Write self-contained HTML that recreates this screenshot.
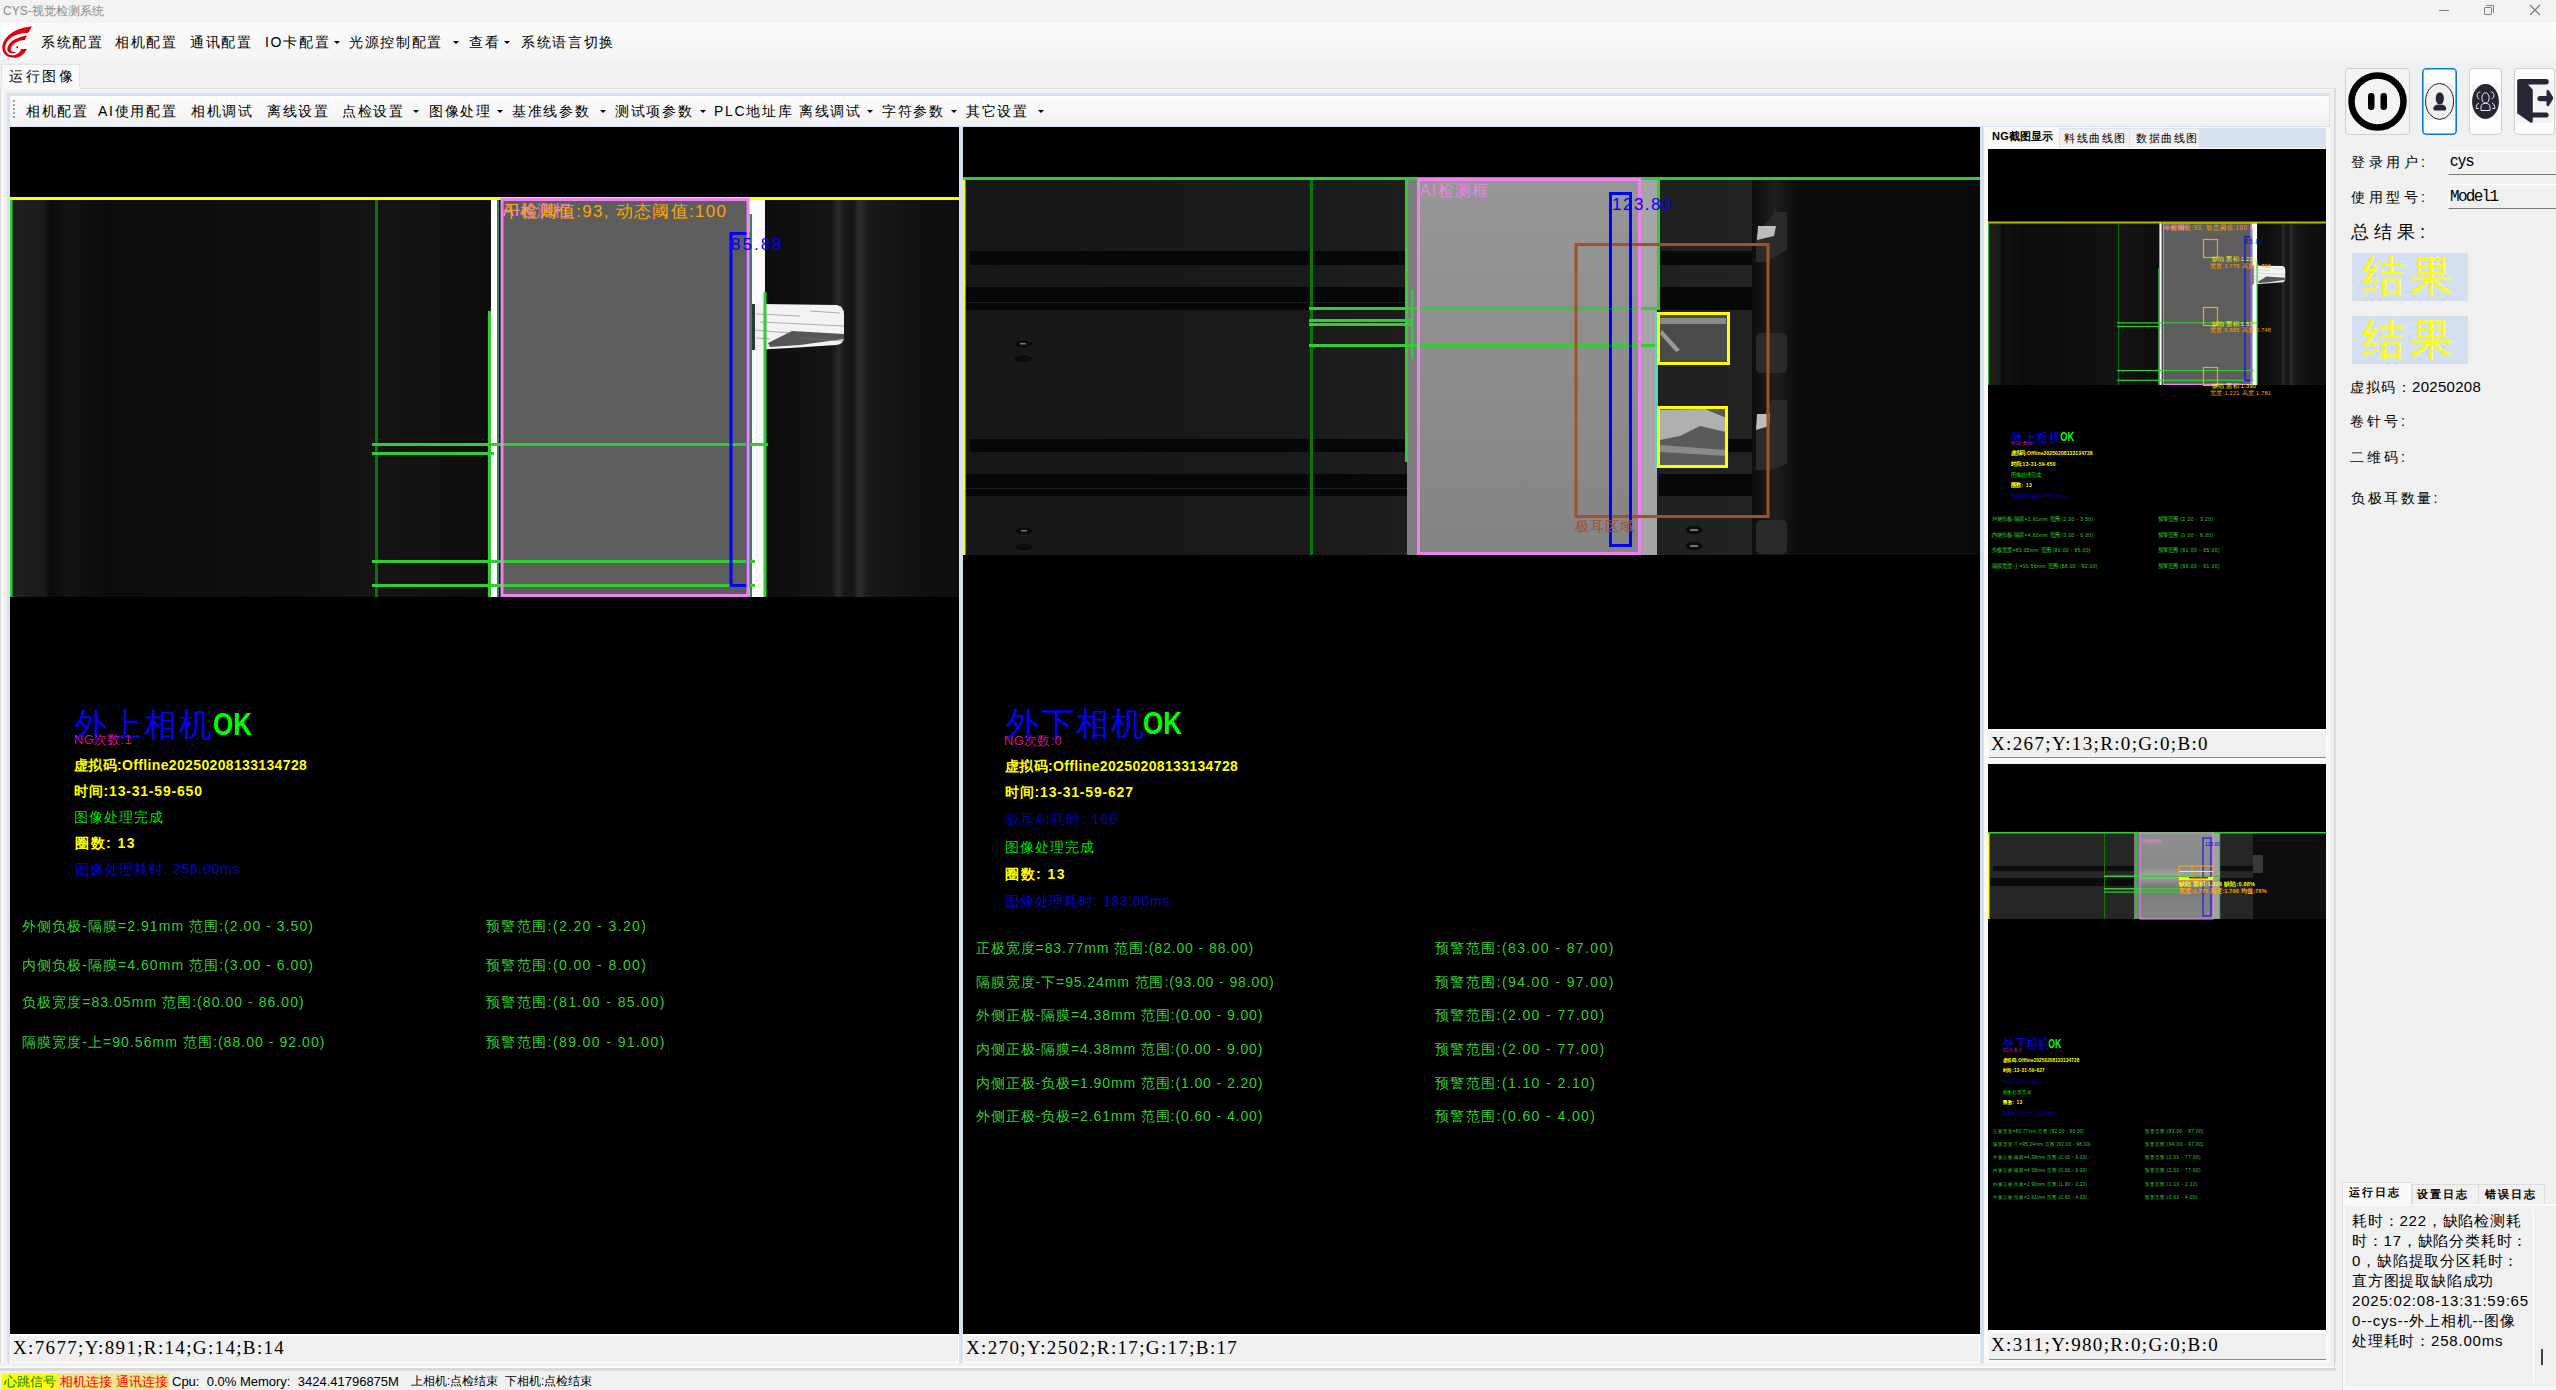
<!DOCTYPE html>
<html><head><meta charset="utf-8">
<style>
*{box-sizing:border-box;margin:0;padding:0}
html,body{width:2556px;height:1390px;overflow:hidden;background:#f0f0f0;font-family:"Liberation Sans",sans-serif;}
.a{position:absolute;white-space:nowrap;line-height:1}
.cj{letter-spacing:1.7px}
.arr{position:absolute;width:0;height:0;border-left:3px solid transparent;border-right:3px solid transparent;border-top:3px solid #000}
</style></head><body>
<!-- title bar -->
<div class="a" style="left:0;top:0;width:2556px;height:23px;background:#f3f3f3"></div>
<div class="a" style="left:3px;top:5px;font-size:12px;color:#8c8c8c">CYS-视觉检测系统</div>
<div class="a" style="left:2439px;top:10px;width:10px;height:1px;background:#808080"></div>
<div class="a" style="left:2484px;top:7px;width:8px;height:8px;border:1px solid #808080;border-radius:1px"></div>
<div class="a" style="left:2486px;top:5px;width:8px;height:8px;border-top:1px solid #808080;border-right:1px solid #808080;border-radius:1px"></div>
<svg class="a" style="left:2529px;top:4px" width="12" height="12"><path d="M1 1 L11 11 M11 1 L1 11" stroke="#7a7a7a" stroke-width="1.1"/></svg>

<!-- menu bar -->
<div class="a" style="left:0;top:23px;width:2556px;height:39px;background:linear-gradient(#fbfbfb,#f4f4f4)"></div>
<div class="a" style="left:2px;top:26px;width:30px;height:33px;background:#fff"></div>
<svg class="a" style="left:0;top:0" width="36" height="62" viewBox="0 0 36 62">
<path d="M32 26.2 C28 26.8 22 27.8 17 30 C11 32.5 6 37 3.5 42 C1.5 46.5 2 51 5 54.5 C8 57.5 13 58.2 17.5 57.5 C22 56.5 25 52.5 27 49 L21.2 49 C20 52 18 54.5 14 55.2 C10 55.8 6.5 54 5.5 50.5 C4.5 46.5 6 42.5 9 39.5 C13 35.5 19 33.5 24 33 L28.5 32.8 Z" fill="#e0000f"/>
<path d="M27 35.4 C23 36 18 37.5 13.5 40.1 C10 42.3 7.6 45.5 7.3 48.9 C7.2 51 8.5 52.6 11 53.2 C13 53.5 15 53.2 16.8 52.5 L12 51.5 C10.8 50.5 10.5 49 11.2 47.5 C12 45.5 14 43.5 17 42 C19.5 40.8 22.5 40.2 25 40.1 Z" fill="#e0000f"/>
<circle cx="17.2" cy="47.3" r="1.1" fill="#e0000f"/>
</svg>
<div class="a cj" style="left:41px;top:35px;font-size:14px;color:#000">系统配置</div>
<div class="a cj" style="left:115px;top:35px;font-size:14px;color:#000">相机配置</div>
<div class="a cj" style="left:190px;top:35px;font-size:14px;color:#000">通讯配置</div>
<div class="a cj" style="left:265px;top:35px;font-size:14px;color:#000">IO卡配置</div>
<div class="arr" style="left:334px;top:41px"></div>
<div class="a cj" style="left:349px;top:35px;font-size:14px;color:#000">光源控制配置</div>
<div class="arr" style="left:453px;top:41px"></div>
<div class="a cj" style="left:469px;top:35px;font-size:14px;color:#000">查看</div>
<div class="arr" style="left:504px;top:41px"></div>
<div class="a cj" style="left:521px;top:35px;font-size:14px;color:#000">系统语言切换</div>

<!-- tab header -->
<div class="a" style="left:1px;top:64px;width:79px;height:26px;background:#f9f9f9;border:1px solid #e3e3e3;border-bottom:none"></div>
<div class="a cj" style="left:9px;top:69px;font-size:14px;color:#000;letter-spacing:2.5px">运行图像</div>
<!-- tab page -->
<div class="a" style="left:0;top:88px;width:2336px;height:1283px;background:#f9f9f9;border:1px solid #dcdcdc"></div>
<div class="a" style="left:4px;top:90px;width:2330px;height:1278px;background:#f0f0f0"></div>
<div class="a" style="left:1px;top:87px;width:79px;height:3px;background:#f9f9f9"></div>
<!-- toolbar container light blue -->
<div class="a" style="left:7px;top:93px;width:2323px;height:1270px;background:#d6e2f1"></div>
<div class="a" style="left:10px;top:96px;width:2319px;height:30px;background:linear-gradient(#fdfdfd,#f1f1f1);border-radius:2px"></div>
<div id="grip" class="a" style="left:13px;top:100px;width:2px;height:18px;background:repeating-linear-gradient(#a0a0a0 0 2px,transparent 2px 4px)"></div>
<div id="toolbar"></div>
<div class="a cj" style="left:26px;top:104px;font-size:14px;color:#000">相机配置</div>
<div class="a cj" style="left:98px;top:104px;font-size:14px;color:#000">AI使用配置</div>
<div class="a cj" style="left:191px;top:104px;font-size:14px;color:#000">相机调试</div>
<div class="a cj" style="left:267px;top:104px;font-size:14px;color:#000">离线设置</div>
<div class="a cj" style="left:342px;top:104px;font-size:14px;color:#000">点检设置</div>
<div class="arr" style="left:413px;top:110px"></div>
<div class="a cj" style="left:429px;top:104px;font-size:14px;color:#000">图像处理</div>
<div class="arr" style="left:497px;top:110px"></div>
<div class="a cj" style="left:512px;top:104px;font-size:14px;color:#000">基准线参数</div>
<div class="arr" style="left:600px;top:110px"></div>
<div class="a cj" style="left:615px;top:104px;font-size:14px;color:#000">测试项参数</div>
<div class="arr" style="left:700px;top:110px"></div>
<div class="a cj" style="left:714px;top:104px;font-size:14px;color:#000">PLC地址库</div>
<div class="a cj" style="left:799px;top:104px;font-size:14px;color:#000">离线调试</div>
<div class="arr" style="left:867px;top:110px"></div>
<div class="a cj" style="left:882px;top:104px;font-size:14px;color:#000">字符参数</div>
<div class="arr" style="left:951px;top:110px"></div>
<div class="a cj" style="left:966px;top:104px;font-size:14px;color:#000">其它设置</div>
<div class="arr" style="left:1038px;top:110px"></div>


<!-- main panels -->
<div class="a" style="left:10px;top:127px;width:949px;height:1207px;background:#000;overflow:hidden" id="camL">
<svg width="949" height="1207" viewBox="10 127 949 1207" style="position:absolute;left:0;top:0;font-family:'Liberation Sans',sans-serif">
<g id="gL">
<defs>
<linearGradient id="lbg" x1="10" x2="959" y1="0" y2="0" gradientUnits="userSpaceOnUse">
<stop offset="0" stop-color="#1f1f1f"/><stop offset="0.035" stop-color="#1b1b1b"/><stop offset="0.042" stop-color="#0b0b0b"/>
<stop offset="0.06" stop-color="#121212"/><stop offset="0.1" stop-color="#0c0c0c"/><stop offset="0.35" stop-color="#111"/>
<stop offset="0.38" stop-color="#141414"/><stop offset="0.5" stop-color="#0e0e0e"/><stop offset="0.8" stop-color="#0d0d0d"/>
<stop offset="0.866" stop-color="#151515"/><stop offset="0.873" stop-color="#2c2c2c"/><stop offset="0.88" stop-color="#181818"/>
<stop offset="0.889" stop-color="#161616"/><stop offset="0.895" stop-color="#2e2e2e"/><stop offset="0.905" stop-color="#1a1a1a"/>
<stop offset="0.95" stop-color="#111"/><stop offset="1" stop-color="#0e0e0e"/>
</linearGradient>
</defs>
<rect x="10" y="200" width="949" height="397" fill="url(#lbg)"/>
<rect x="10" y="197" width="949" height="3" fill="#ffff00"/>
<rect x="10" y="200" width="2.5" height="397" fill="#32cd32"/>
<rect x="491" y="200" width="7" height="397" fill="#fff"/>
<rect x="749" y="200" width="16" height="397" fill="#fbfbfb"/>
<rect x="502" y="200" width="246" height="396" fill="#5d5d5d"/>
<rect x="375" y="200" width="3" height="397" fill="#077807"/>
<rect x="497" y="200" width="2" height="397" fill="#2e8b57"/>
<rect x="749.5" y="214" width="2.5" height="383" fill="#2e8b57"/>
<rect x="488" y="311" width="3" height="286" fill="#32cd32"/>
<rect x="372" y="443" width="396" height="3" fill="#32cd32"/>
<rect x="372" y="452" width="122" height="3" fill="#32cd32"/>
<rect x="372" y="560" width="383" height="3" fill="#32cd32"/>
<rect x="372" y="584" width="383" height="3" fill="#32cd32"/>
<path d="M753 304 L837 305 Q844 307 844 314 L844 337 Q844 344 836 345 L790 348 L753 350 Z" fill="#f2f2f2"/>
<path d="M768 343 L792 331 L844 334 L844 339 L800 345 L770 347 Z" fill="#555"/>
<g stroke="#777" stroke-width="0.8" opacity="0.7"><path d="M756 314 L800 316 M760 322 L844 326 M754 330 L790 333 M800 338 L844 341 M756 338 L770 339 M810 311 L840 313"/></g>
<rect x="752" y="304" width="3" height="46" fill="#333"/>
<rect x="763.5" y="292" width="3" height="305" fill="#32cd32"/>
<rect x="731" y="233.5" width="17" height="352" fill="none" stroke="#0000ff" stroke-width="3"/>
<rect x="502" y="199.5" width="246" height="396" fill="none" stroke="#ee82ee" stroke-width="3"/>
<text x="503" y="216" font-size="16" fill="#ee82ee" letter-spacing="1">AI检测框</text>
<text x="503" y="217" font-size="17" fill="#ffa500" letter-spacing="1.3">干检阈值:93, 动态阈值:100</text>
<text x="731" y="250" font-size="17" fill="#0000ff" letter-spacing="2">85.88</text>
<text x="74" y="736" font-size="33" fill="#0000ff" letter-spacing="2">外上相机</text>
<text x="213" y="735" font-size="31" fill="#00ff00" font-weight="bold" transform="translate(213 0) scale(0.84 1) translate(-213 0)">OK</text>
<text x="74" y="744" font-size="13" fill="#c8157f" letter-spacing="0.3">NG次数:1</text>
<g font-size="14" font-weight="bold" fill="#ffff00">
<text x="74" y="770" letter-spacing="0.35">虚拟码:Offline20250208133134728</text>
<text x="74" y="796" letter-spacing="0.8">时间:13-31-59-650</text>
<text x="75" y="848" letter-spacing="1.5">圈数: 13</text>
</g>
<text x="74" y="822" font-size="14" fill="#00dd00" letter-spacing="1">图像处理完成</text>
<text x="75" y="874" font-size="14" fill="#0000cc" letter-spacing="0.75">图像处理耗时: 258.00ms</text>
<g font-size="14" fill="#33cc33" letter-spacing="1.05">
<text x="22" y="930.5">外侧负极-隔膜=2.91mm 范围:(2.00 - 3.50)</text>
<text x="22" y="969.5">内侧负极-隔膜=4.60mm 范围:(3.00 - 6.00)</text>
<text x="22" y="1007">负极宽度=83.05mm 范围:(80.00 - 86.00)</text>
<text x="22" y="1046.5">隔膜宽度-上=90.56mm 范围:(88.00 - 92.00)</text>
<g letter-spacing="1.4">
<text x="486" y="930.5">预警范围:(2.20 - 3.20)</text>
<text x="486" y="969.5">预警范围:(0.00 - 8.00)</text>
<text x="486" y="1007">预警范围:(81.00 - 85.00)</text>
<text x="486" y="1046.5">预警范围:(89.00 - 91.00)</text></g>
</g>
</g>
</svg></div>
<div class="a" style="left:963px;top:127px;width:1017px;height:1207px;background:#000;overflow:hidden" id="camM">
<svg width="1017" height="1207" viewBox="963 127 1017 1207" style="position:absolute;left:0;top:0;font-family:'Liberation Sans',sans-serif">
<defs>
<linearGradient id="mbg" x1="963" x2="1980" y1="0" y2="0" gradientUnits="userSpaceOnUse">
<stop offset="0" stop-color="#171717"/><stop offset="0.33" stop-color="#1a1a1a"/><stop offset="0.44" stop-color="#1e1e1e"/><stop offset="0.69" stop-color="#202020"/><stop offset="0.78" stop-color="#222"/><stop offset="1" stop-color="#222"/>
</linearGradient>
<linearGradient id="pk" x1="0" x2="0" y1="180" y2="555" gradientUnits="userSpaceOnUse">
<stop offset="0" stop-color="#979797"/><stop offset="0.4" stop-color="#8f8f8f"/><stop offset="1" stop-color="#848484"/>
</linearGradient>
<linearGradient id="rdk" x1="1752" x2="1980" y1="0" y2="0" gradientUnits="userSpaceOnUse">
<stop offset="0" stop-color="#0e0e0e"/><stop offset="0.03" stop-color="#121212"/><stop offset="0.1" stop-color="#1e1e1e"/><stop offset="0.15" stop-color="#141414"/><stop offset="0.2" stop-color="#0c0c0c"/><stop offset="1" stop-color="#0a0a0a"/>
</linearGradient>
</defs>
<rect x="963" y="180" width="1017" height="375" fill="url(#mbg)"/>
<g fill="#070707">
<rect x="970" y="251" width="437" height="14"/>
<rect x="965" y="287" width="442" height="23"/>
<rect x="970" y="439" width="437" height="13"/>
<rect x="965" y="474" width="442" height="22"/>
<rect x="1659" y="251" width="95" height="14"/>
<rect x="1659" y="287" width="95" height="23"/>
<rect x="1659" y="439" width="95" height="13"/>
<rect x="1659" y="474" width="95" height="22"/>
</g>
<g stroke="#1e1e1e" stroke-width="1.2"><line x1="965" y1="302.5" x2="1407" y2="302.5"/><line x1="965" y1="488.5" x2="1407" y2="488.5"/></g>
<g fill="#0c0c0c" stroke="#222" stroke-width="1">
<ellipse cx="1023" cy="344" rx="10" ry="4.5"/><ellipse cx="1023" cy="359" rx="10" ry="4.5"/>
<ellipse cx="1024" cy="531" rx="10" ry="4.5"/><ellipse cx="1024" cy="547" rx="10" ry="4.5"/>
<ellipse cx="1694" cy="530" rx="9" ry="5"/><ellipse cx="1694" cy="546" rx="9" ry="5"/>
</g>
<g fill="#777"><rect x="1020" y="343" width="6" height="1.5"/><rect x="1021" y="530" width="6" height="1.5"/><rect x="1690" y="529" width="8" height="2"/><rect x="1690" y="545" width="8" height="2"/></g>
<rect x="1752" y="180" width="228" height="375" fill="url(#rdk)"/>
<g fill="#2a2a2a">
<path d="M1775 212 L1787 212 L1787 250 L1765 262 L1756 262 L1756 235 Z"/>
<rect x="1756" y="333" width="31" height="40" rx="5"/>
<path d="M1772 400 L1787 400 L1787 464 L1770 470 L1756 470 L1756 430 Z"/>
<rect x="1756" y="520" width="31" height="34" rx="5"/>
</g>
<g fill="#bdbdbd"><path d="M1758 226 L1776 226 L1774 236 L1757 240 Z"/><path d="M1757 414 L1770 414 L1769 426 L1756 430 Z"/></g>
<rect x="1407" y="180" width="11" height="375" fill="#7c7c7c"/>
<rect x="1418" y="180" width="222" height="375" fill="url(#pk)"/>
<rect x="1640" y="180" width="17" height="375" fill="#a5a5a5"/>
<rect x="1657" y="313" width="73" height="52" fill="#4a4a4a"/>
<rect x="1657" y="406" width="71" height="62" fill="#5a5a5a"/>
<path d="M1660 410 L1705 409 L1726 418 L1726 432 L1700 426 L1680 436 L1660 440 Z" fill="#b0b0b0"/>
<path d="M1660 445 L1726 450 L1726 456 L1660 452 Z" fill="#8a8a8a"/>
<path d="M1660 318 L1726 318 L1726 324 L1660 324 Z" fill="#8a8a8a"/>
<path d="M1662 330 L1680 350 L1676 352 L1660 334 Z" fill="#999"/>
<rect x="963" y="180" width="2.5" height="375" fill="#ffff00"/>
<rect x="1310" y="180" width="3" height="375" fill="#077807"/>
<rect x="1405" y="180" width="3" height="282" fill="#32cd32"/>
<rect x="1411" y="290" width="2.5" height="69" fill="#32cd32"/>
<rect x="1309" y="307" width="351" height="3" fill="#32cd32"/>
<rect x="1309" y="319" width="103" height="3" fill="#32cd32"/>
<rect x="1309" y="323" width="103" height="3" fill="#32cd32"/>
<rect x="1309" y="344" width="346" height="3" fill="#32cd32"/>
<rect x="1657" y="180" width="3" height="128" fill="#32cd32"/>
<rect x="1655" y="313" width="3" height="155" fill="#40e0d0"/>
<rect x="963" y="177" width="1017" height="3" fill="#32cd32"/>
<rect x="1418.5" y="179.5" width="221" height="374" fill="none" stroke="#ee82ee" stroke-width="3"/>
<rect x="1576" y="244.5" width="192" height="272" fill="none" stroke="#a0522d" stroke-width="3"/>
<rect x="1610.5" y="193.5" width="20" height="352" fill="none" stroke="#0000ff" stroke-width="3"/>
<rect x="1658.5" y="313.5" width="70" height="50" fill="none" stroke="#ffff00" stroke-width="3"/>
<rect x="1658.5" y="407.5" width="68" height="59" fill="none" stroke="#ffff00" stroke-width="3"/>
<text x="1420" y="196" font-size="16" fill="#ee82ee" letter-spacing="1.2">AI检测框</text>
<text x="1612" y="210" font-size="17" fill="#0000ff" letter-spacing="1.5">123.80</text>
<text x="1575" y="531" font-size="14" fill="#a0522d" letter-spacing="1">极耳区域</text>
<g id="gMt">
<text x="1006" y="735" font-size="33" fill="#0000ff" letter-spacing="2">外下相机</text>
<text x="1143" y="734" font-size="31" fill="#00ff00" font-weight="bold" transform="translate(1143 0) scale(0.84 1) translate(-1143 0)">OK</text>
<text x="1004" y="745" font-size="13" fill="#c8157f" letter-spacing="0.3">NG次数:0</text>
<g font-size="14" font-weight="bold" fill="#ffff00">
<text x="1005" y="771" letter-spacing="0.35">虚拟码:Offline20250208133134728</text>
<text x="1005" y="797" letter-spacing="0.8">时间:13-31-59-627</text>
<text x="1005" y="879" letter-spacing="1.5">圈数: 13</text>
</g>
<text x="1005" y="824" font-size="14" fill="#0000aa" letter-spacing="1.2">极耳AI耗时: 165</text>
<text x="1005" y="852" font-size="14" fill="#00dd00" letter-spacing="1">图像处理完成</text>
<text x="1005" y="905.5" font-size="14" fill="#0000cc" letter-spacing="0.75">图像处理耗时: 183.00ms</text>
<g font-size="14" fill="#33cc33" letter-spacing="0.9">
<text x="976" y="952.5">正极宽度=83.77mm 范围:(82.00 - 88.00)</text>
<text x="976" y="986.5">隔膜宽度-下=95.24mm 范围:(93.00 - 98.00)</text>
<text x="976" y="1019.5">外侧正极-隔膜=4.38mm 范围:(0.00 - 9.00)</text>
<text x="976" y="1053.5">内侧正极-隔膜=4.38mm 范围:(0.00 - 9.00)</text>
<text x="976" y="1087.5">内侧正极-负极=1.90mm 范围:(1.00 - 2.20)</text>
<text x="976" y="1120.5">外侧正极-负极=2.61mm 范围:(0.60 - 4.00)</text>
</g>
<g font-size="14" fill="#33cc33" letter-spacing="1.4">
<text x="1435" y="952.5">预警范围:(83.00 - 87.00)</text>
<text x="1435" y="986.5">预警范围:(94.00 - 97.00)</text>
<text x="1435" y="1019.5">预警范围:(2.00 - 77.00)</text>
<text x="1435" y="1053.5">预警范围:(2.00 - 77.00)</text>
<text x="1435" y="1087.5">预警范围:(1.10 - 2.10)</text>
<text x="1435" y="1120.5">预警范围:(0.60 - 4.00)</text>
</g>
</g>
</svg></div>
<div class="a" style="left:10px;top:1334px;width:949px;height:29px;background:#fff"></div>
<div class="a" style="left:11px;top:1336px;width:947px;height:26px;background:#f0f0f0"></div>
<div class="a" style="left:963px;top:1334px;width:1017px;height:29px;background:#fff"></div>
<div class="a" style="left:964px;top:1336px;width:1015px;height:26px;background:#f0f0f0"></div>
<div class="a" style="left:13px;top:1338px;font-family:'Liberation Serif',serif;font-size:19px;letter-spacing:1.35px;color:#000">X:7677;Y:891;R:14;G:14;B:14</div>
<div class="a" style="left:966px;top:1338px;font-family:'Liberation Serif',serif;font-size:19px;letter-spacing:1.35px;color:#000">X:270;Y:2502;R:17;G:17;B:17</div>
<div class="a" style="left:0;top:1363px;width:2336px;height:3px;background:#f0f0f0"></div>
<div class="a" style="left:0;top:1366px;width:2336px;height:2px;background:#fbfbfb"></div>
<div class="a" style="left:0;top:1368px;width:2336px;height:2px;background:#d9d9d9"></div>
<!-- NG panel -->
<div class="a" style="left:1984px;top:127px;width:346px;height:1236px;background:#f9f9f9"></div>
<div class="a" style="left:1985px;top:128px;width:341px;height:20px;background:#d6e2f1"></div>
<div class="a" style="left:1985px;top:128px;width:74px;height:21px;background:#f9f9f9"></div>
<div class="a" style="left:2060px;top:129px;width:69px;height:19px;background:#f0f0f0"></div>
<div class="a" style="left:2130px;top:129px;width:69px;height:19px;background:#f0f0f0"></div>
<div class="a" style="left:1992px;top:131px;font-size:11px;font-weight:bold;letter-spacing:0.2px;color:#000">NG截图显示</div>
<div class="a" style="left:2064px;top:133px;font-size:11px;letter-spacing:1.5px;color:#000">料线曲线图</div>
<div class="a" style="left:2136px;top:133px;font-size:11px;letter-spacing:1.5px;color:#000">数据曲线图</div>
<div class="a" style="left:1988px;top:149px;width:338px;height:580px;background:#000;overflow:hidden" id="ng1">
<svg width="338" height="580" viewBox="1988 149 338 580" style="position:absolute;left:0;top:0;font-family:'Liberation Sans',sans-serif">
<use href="#gL" transform="matrix(0.3564 0 0 0.4075 1984.44 141.72)"/>
<rect x="1988" y="221.5" width="338" height="1.8" fill="#b5b500"/>
<g fill="none" stroke="#ffa500" stroke-width="1.2">
<rect x="2203.5" y="239.5" width="14" height="18"/><rect x="2203.5" y="307.5" width="14" height="18"/><rect x="2203.5" y="367.5" width="14" height="18"/>
</g>
<g font-size="5.5" letter-spacing="0.3">
<text x="2212" y="261" fill="#ffff00">缺陷 面积:1.226</text><text x="2210" y="268" fill="#ffa500">宽度:1.775 高度:1.798</text>
<text x="2212" y="326" fill="#ffff00">缺陷 面积:1.513</text><text x="2210" y="332" fill="#ffa500">宽度:0.885 高度:2.748</text>
<text x="2212" y="388" fill="#ffff00">缺陷 面积:1.390</text><text x="2210" y="395" fill="#ffa500">宽度:1.221 高度:1.781</text>
</g>
</svg></div>
<div class="a" style="left:1989px;top:730px;width:337px;height:28px;background:#f0f0f0;border-top:1px solid #fff;border-bottom:1px solid #8c8c8c"></div>
<div class="a" style="left:1991px;top:734px;font-family:'Liberation Serif',serif;font-size:19px;letter-spacing:1.35px;color:#000">X:267;Y:13;R:0;G:0;B:0</div>
<div class="a" style="left:1988px;top:764px;width:338px;height:566px;background:#000;overflow:hidden" id="ng2">
<svg width="338" height="566" viewBox="1988 764 338 566" style="position:absolute;left:0;top:0;font-family:'Liberation Sans',sans-serif">
<defs>
<linearGradient id="n2p" x1="0" x2="0" y1="833" y2="919" gradientUnits="userSpaceOnUse">
<stop offset="0" stop-color="#8e8e8e"/><stop offset="0.4" stop-color="#8a8a8a"/><stop offset="0.5" stop-color="#a5a5a5"/><stop offset="0.62" stop-color="#7a7a7a"/><stop offset="1" stop-color="#868686"/>
</linearGradient>
</defs>
<rect x="1988" y="833" width="338" height="86" fill="#262626"/>
<rect x="1993" y="866" width="145" height="5" fill="#0c0c0c"/>
<rect x="1990" y="878" width="148" height="8" fill="#0c0c0c"/>
<rect x="2220" y="866" width="48" height="5" fill="#0c0c0c"/>
<rect x="2220" y="878" width="48" height="8" fill="#0c0c0c"/>
<rect x="2253" y="833" width="73" height="86" fill="#0d0d0d"/>
<rect x="2253" y="855" width="10" height="18" fill="#3a3a3a"/>
<rect x="2134" y="833" width="6" height="86" fill="#7a7a7a"/>
<rect x="2140" y="833" width="73" height="86" fill="url(#n2p)"/>
<rect x="2213" y="833" width="7" height="86" fill="#a0a0a0"/>
<rect x="1988" y="833" width="1.5" height="86" fill="#ffff00"/>
<rect x="2104" y="833" width="1" height="86" fill="#077807"/>
<rect x="2135.5" y="833" width="1.2" height="86" fill="#32cd32"/>
<rect x="2219" y="833" width="1.2" height="86" fill="#32cd32"/>
<rect x="2104" y="875.5" width="116" height="1.5" fill="#32cd32"/>
<rect x="2104" y="888" width="76" height="1.5" fill="#32cd32"/>
<rect x="2104" y="891.5" width="76" height="1.2" fill="#32cd32"/>
<rect x="1988" y="832" width="338" height="1.5" fill="#32cd32"/>
<rect x="2140" y="833" width="73" height="86" fill="none" stroke="#ee82ee" stroke-width="1"/>
<rect x="2203" y="838" width="8" height="78" fill="none" stroke="#0000ff" stroke-width="1"/>
<g fill="none" stroke="#ffa500" stroke-width="1"><rect x="2179" y="866" width="34" height="14"/><line x1="2192" y1="866" x2="2192" y2="880"/><line x1="2201" y1="866" x2="2201" y2="880"/></g>
<rect x="2179" y="871" width="34" height="1" fill="#ffff00"/>
<rect x="2179" y="877" width="34" height="3" fill="#ffff00"/>
<rect x="2189" y="877" width="19" height="1.5" fill="#ff0000"/>
<text x="2179" y="885.5" font-size="5.5" font-weight="bold" fill="#ffff00" letter-spacing="0.2">缺陷 面积:1.226 缺陷:0.88%</text>
<text x="2179" y="892.5" font-size="5.5" font-weight="bold" fill="#ffa500" letter-spacing="0.2">宽度:1.775 高度:1.798 均值:76%</text>
<text x="2142" y="843" font-size="5" fill="#ee82ee">AI检测框</text>
<text x="2205" y="846" font-size="5" fill="#0000ff">123.80</text>
<use href="#gMt" transform="matrix(0.331 0 0 0.39 1669.9 761.6)"/>
</svg></div>
<div class="a" style="left:1989px;top:1332px;width:337px;height:28px;background:#f0f0f0;border-top:1px solid #fff;border-bottom:1px solid #8c8c8c"></div>
<div class="a" style="left:1991px;top:1335px;font-family:'Liberation Serif',serif;font-size:19px;letter-spacing:1.35px;color:#000">X:311;Y:980;R:0;G:0;B:0</div>
<!-- status bar -->
<div class="a" style="left:1px;top:1373px;width:56px;height:17px;background:#ffff00"></div>
<div class="a" style="left:57px;top:1373px;width:112px;height:17px;background:#f0e68c"></div>
<div class="a" style="left:4px;top:1375px;font-size:13px;color:#008000">心跳信号</div>
<div class="a" style="left:60px;top:1375px;font-size:13px;color:#ff0000">相机连接</div>
<div class="a" style="left:116px;top:1375px;font-size:13px;color:#ff0000">通讯连接</div>
<div class="a" style="left:172px;top:1375px;font-size:13px;color:#000">Cpu:&nbsp; 0.0% Memory:&nbsp; 3424.41796875M</div>
<div class="a" style="left:411px;top:1375px;font-size:12px;color:#000">上相机:点检结束</div>
<div class="a" style="left:505px;top:1375px;font-size:12px;color:#000">下相机:点检结束</div>

<!-- right sidebar -->
<div class="a" style="left:2345px;top:68px;width:65px;height:67px;background:#f3f3f3;border:1px solid #cfcfcf;border-radius:4px"></div>
<svg class="a" style="left:2345px;top:68px" width="65" height="67" viewBox="0 0 65 67">
<circle cx="32.5" cy="33.5" r="26" fill="none" stroke="#000" stroke-width="6.5"/>
<rect x="23" y="25" width="6.5" height="17" rx="3.2" fill="#000"/>
<rect x="35.5" y="25" width="6.5" height="17" rx="3.2" fill="#000"/>
</svg>
<div class="a" style="left:2422px;top:68px;width:35px;height:67px;background:#fdfdfd;border:1px solid #0a78d7;box-shadow:inset 0 0 0 0.6px #0a78d7;border-radius:4px"></div>
<svg class="a" style="left:2422px;top:68px" width="35" height="67" viewBox="0 0 35 67">
<rect x="3" y="15" width="29" height="37" fill="#f0f0f0"/>
<ellipse cx="17.6" cy="33.4" rx="14" ry="18" fill="none" stroke="#252535" stroke-width="1"/>
<ellipse cx="17.8" cy="30.5" rx="4.1" ry="6.2" fill="#252535"/>
<path d="M11.5 41.5 C11 40 11.5 38.2 13.5 37.2 L15.5 36.4 C16.5 37.3 19 37.3 20 36.4 L22 37.2 C24 38.2 24.6 40 24.1 41.5 C23.9 42.3 23.3 42.6 22.6 42.6 L13 42.6 C12.3 42.6 11.7 42.3 11.5 41.5 Z" fill="#252535"/>
</svg>
<div class="a" style="left:2469px;top:68px;width:33px;height:67px;background:#fdfdfd;border:1px solid #d0d0d0;border-radius:4px"></div>
<div class="a" style="left:2514px;top:68px;width:41px;height:67px;background:#fdfdfd;border:1px solid #d0d0d0;border-radius:4px"></div>
<svg class="a" style="left:2460px;top:60px" width="96" height="80" viewBox="2460 60 96 80">
<rect x="2472" y="84" width="26.6" height="35" fill="#f3f3f3"/>
<ellipse cx="2485.5" cy="101.5" rx="13.4" ry="17.5" fill="#252535"/>
<g fill="none" stroke="#fff" stroke-width="0.9">
<path d="M2479.5 99 C2477.5 98.5 2476.8 96.5 2477.2 94.5 C2477.7 92.5 2479 91.8 2480.3 92"/>
<path d="M2491.5 99 C2493.5 98.5 2494.2 96.5 2493.8 94.5 C2493.3 92.5 2492 91.8 2490.7 92"/>
<path d="M2479 103 C2477 103.5 2476 106 2476.2 108.5 L2478.8 108.5"/>
<path d="M2492 103 C2494 103.5 2495 106 2494.8 108.5 L2492.2 108.5"/>
<ellipse cx="2485.5" cy="97.9" rx="3.6" ry="5.2"/>
<path d="M2481 110.5 L2481 107 C2481 104.5 2483 103.3 2485.5 103.3 C2488 103.3 2490 104.5 2490 107 L2490 110.5 Z"/>
</g>
<rect x="2517" y="79" width="36" height="44" fill="#f3f3f3"/>
<path d="M2519.5 79 L2546 79 A2.75 2.75 0 0 1 2546 84.5 L2528 84.5 L2532.8 89.7 L2532.8 112.4 L2546 112.4 A2.6 2.6 0 0 1 2546 117.6 L2532.8 117.6 L2532.8 121 C2532.8 122.5 2531.5 123.3 2530.3 122.6 L2517.2 113.2 L2517.2 81.5 C2517.2 80 2518 79 2519.5 79 Z" fill="#262636"/>
<path d="M2540 96 L2546.5 96 L2546.5 91.5 C2546.5 90 2548 89.5 2549 90.5 L2552.8 96.8 C2553.3 97.6 2553.3 98.6 2552.8 99.4 L2549 105.6 C2548 106.6 2546.5 106.2 2546.5 104.6 L2546.5 101.2 L2540 101.2 A2.6 2.6 0 0 1 2540 96 Z" fill="#262636"/>
</svg>
<div class="a cj" style="left:2351px;top:155px;font-size:14px;letter-spacing:3.5px;color:#000">登录用户:</div>
<div class="a" style="left:2448px;top:151px;width:108px;height:24px;background:#f0f0f0;border-top:1px solid #fff;border-left:1px solid #fff;border-bottom:1px solid #7a7a7a"></div>
<div class="a" style="left:2450px;top:153px;font-size:16px;color:#000">cys</div>
<div class="a cj" style="left:2351px;top:190px;font-size:14px;letter-spacing:3.5px;color:#000">使用型号:</div>
<div class="a" style="left:2448px;top:184px;width:108px;height:25px;background:#f0f0f0;border-top:1px solid #fff;border-left:1px solid #fff;border-bottom:1px solid #7a7a7a"></div>
<div class="a" style="left:2450px;top:189px;font-size:16px;color:#000;font-family:'Liberation Mono',monospace;letter-spacing:-1.7px">Model1</div>
<div class="a cj" style="left:2351px;top:223px;font-size:18px;letter-spacing:5px;color:#000">总结果:</div>
<div class="a" style="left:2352px;top:253px;width:116px;height:48px;background:#d4e0ef"></div>
<div class="a" style="left:2362px;top:255px;font-size:43px;letter-spacing:5px;color:#ffff00">结果</div>
<div class="a" style="left:2352px;top:316px;width:116px;height:48px;background:#d4e0ef"></div>
<div class="a" style="left:2362px;top:318px;font-size:43px;letter-spacing:5px;color:#ffff00">结果</div>
<div class="a" style="left:2350px;top:378.5px;font-size:14px;color:#000"><span style="letter-spacing:1.5px">虚拟码：</span><span style="font-size:15px;letter-spacing:0.3px">20250208</span></div>
<div class="a cj" style="left:2350px;top:414px;font-size:14px;letter-spacing:3px;color:#000">卷针号:</div>
<div class="a cj" style="left:2350px;top:450px;font-size:14px;letter-spacing:3px;color:#000">二维码:</div>
<div class="a cj" style="left:2351px;top:491px;font-size:14px;letter-spacing:2.5px;color:#000">负极耳数量:</div>
<!-- log -->
<div class="a" style="left:2334px;top:88px;width:1px;height:1282px;background:#d9d9d9"></div>
<div class="a" style="left:2342px;top:1182px;width:70px;height:23px;background:#f9f9f9;border:1px solid #dcdcdc;border-bottom:none"></div>
<div class="a" style="left:2412px;top:1184px;width:67px;height:21px;background:#f0f0f0;border:1px solid #dcdcdc;border-bottom:none"></div>
<div class="a" style="left:2478px;top:1184px;width:67px;height:21px;background:#f0f0f0;border:1px solid #dcdcdc;border-bottom:none"></div>
<div class="a" style="left:2342px;top:1204px;width:214px;height:186px;background:#f9f9f9;border-left:1px solid #dcdcdc"></div>
<div class="a" style="left:2345px;top:1206px;width:211px;height:181px;background:#f0f0f0"></div>
<div class="a" style="left:2533px;top:1210px;width:1px;height:173px;background:#fff"></div>
<div class="a" style="left:2349px;top:1187px;font-size:11px;letter-spacing:2px;font-weight:bold;color:#000">运行日志</div>
<div class="a" style="left:2417px;top:1189px;font-size:11px;letter-spacing:2px;font-weight:bold;color:#000">设置日志</div>
<div class="a" style="left:2485px;top:1189px;font-size:11px;letter-spacing:2px;font-weight:bold;color:#000">错误日志</div>
<div class="a" style="left:2352px;top:1211px;width:190px;font-size:15px;line-height:20px;white-space:nowrap;letter-spacing:0.8px;color:#000">耗时：222，缺陷检测耗<br>时：17，缺陷分类耗时：<br>0，缺陷提取分区耗时：<br>直方图提取缺陷成功<br>2025:02:08-13:31:59:65<br>0--cys--外上相机--图像<br>处理耗时：258.00ms</div>
<div class="a" style="left:2541px;top:1349px;width:2px;height:16px;background:#444"></div>

</body></html>
